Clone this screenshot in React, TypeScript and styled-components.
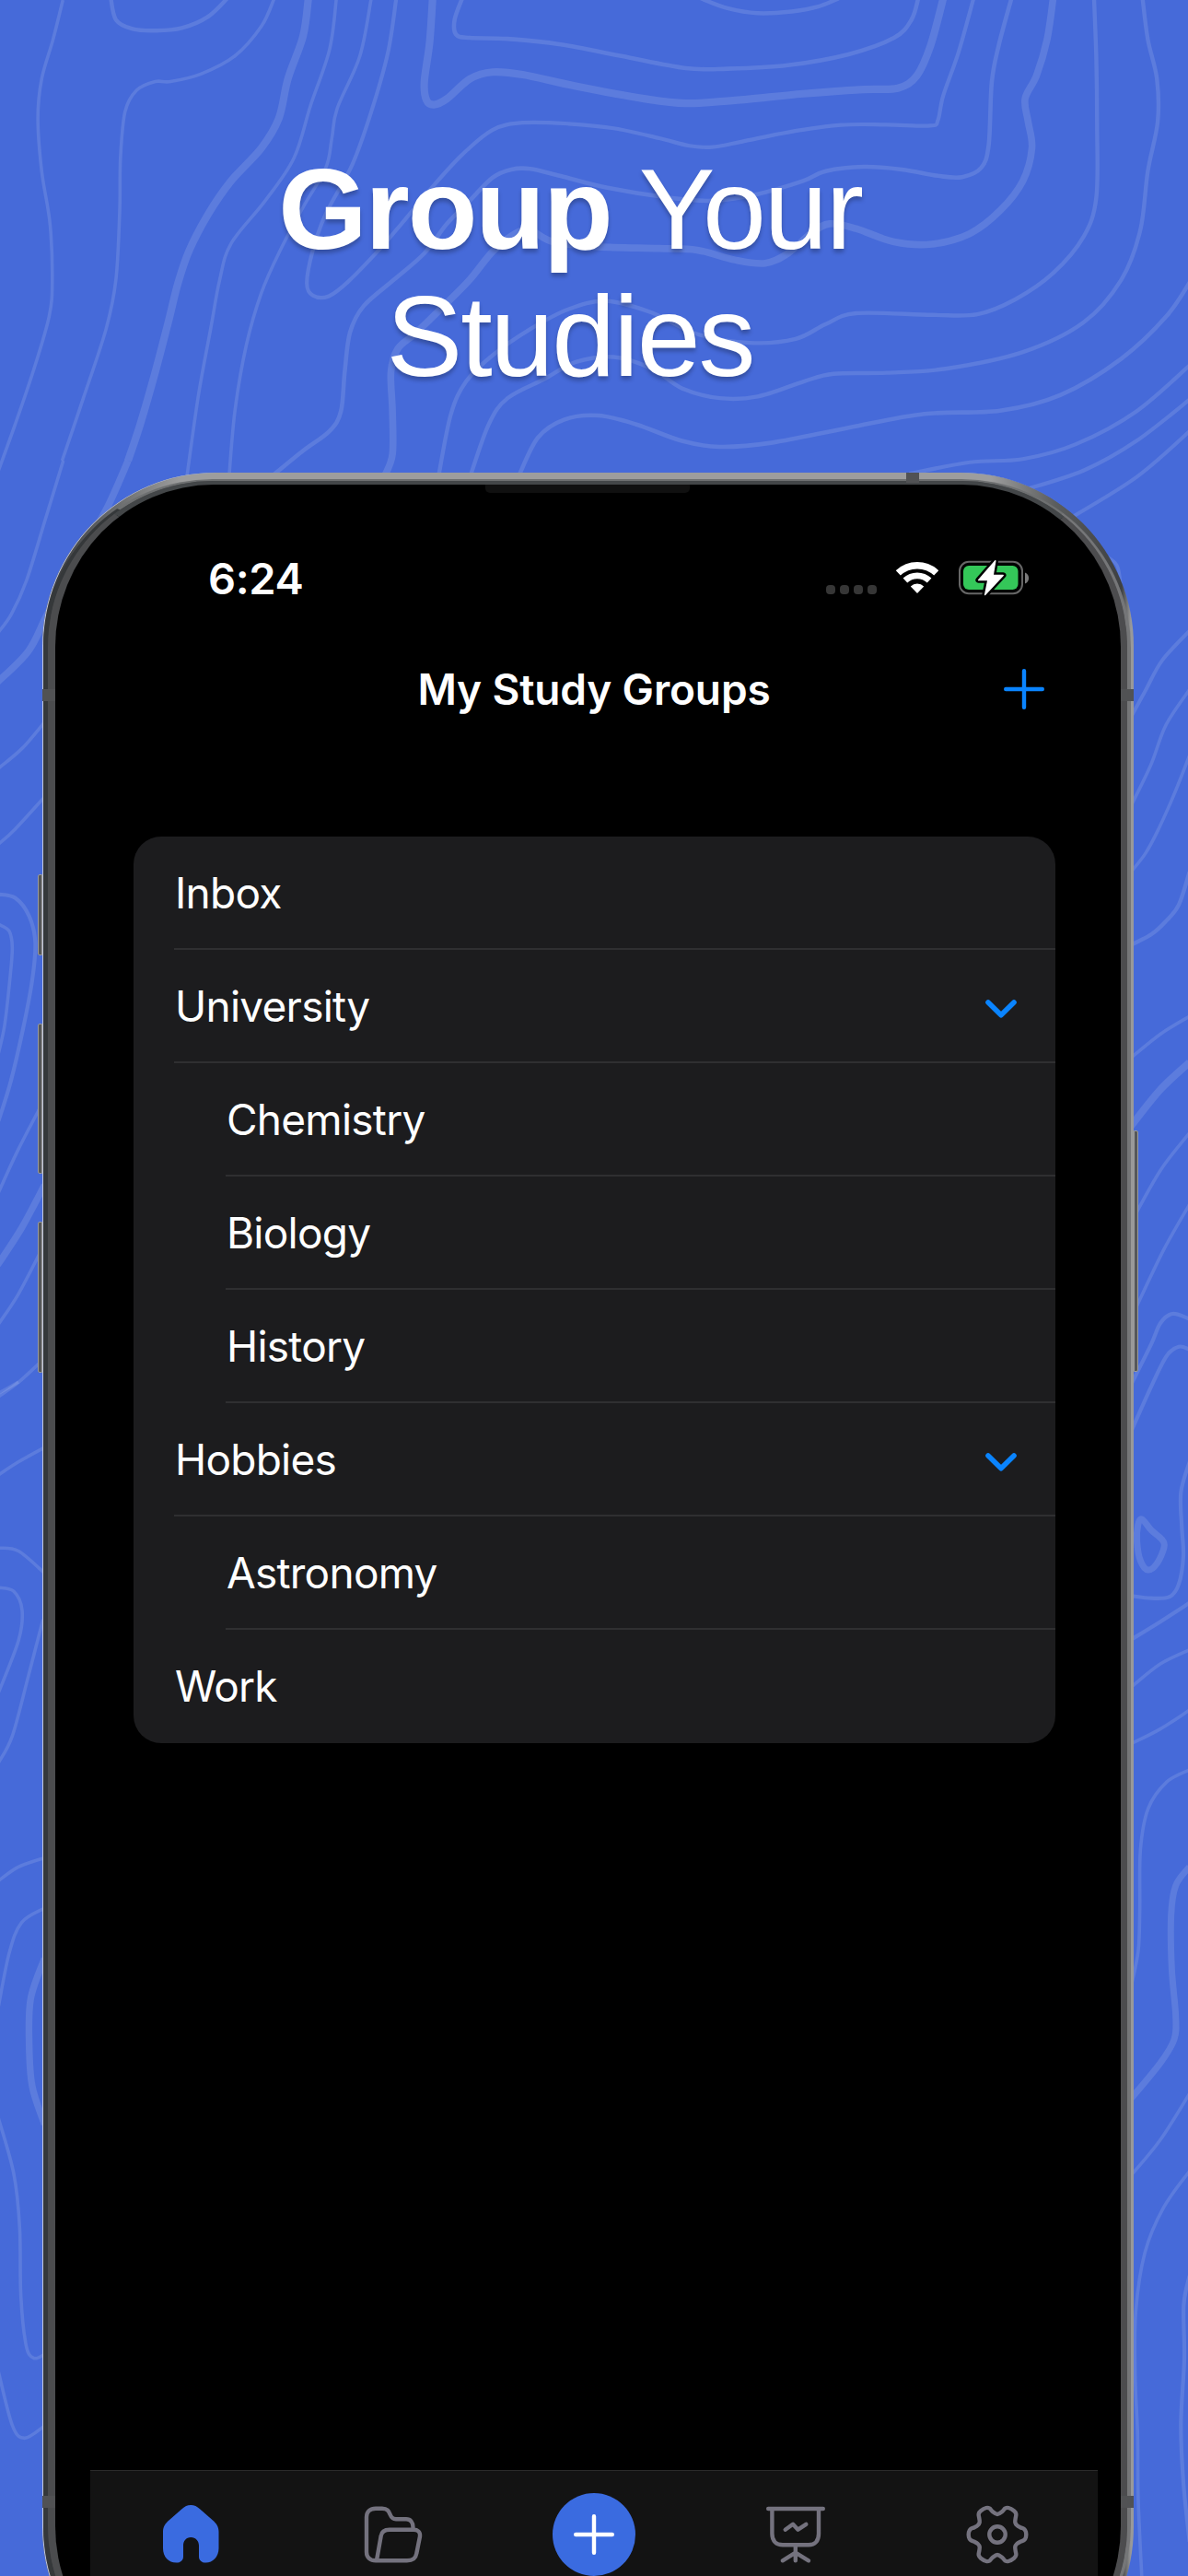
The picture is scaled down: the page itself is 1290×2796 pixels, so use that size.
import styled, { createGlobalStyle, css } from "styled-components";

type Point = [number, number];

const COLORS = {
  BACKDROP: "#466ad9",
  CONTOUR: "rgba(255, 255, 255, 0.12)",
  ACCENT: "#0a84ff",
  BRAND: "#3a6be0",
  CARD: "#1c1c1e",
  SEPARATOR: "#2f2f31",
  ICON: "#74727e",
};

const GlobalStyle = createGlobalStyle`
  *, *::before, *::after {
    box-sizing: border-box;
  }

  body {
    margin: 0;
    font-family: Inter, "Liberation Sans", sans-serif;
    color: #fff;
  }
`;

// Catmull-Rom spline through the given points
const smooth = (points: Point[], closed = false) => {
  const count = points.length;
  const at = (i: number) =>
    closed
      ? points[(i + count) % count]
      : points[Math.max(0, Math.min(count - 1, i))];
  let d = `M${points[0].join(" ")}`;
  for (let i = 0; i < (closed ? count : count - 1); i++) {
    const [p0, p1, p2, p3] = [at(i - 1), at(i), at(i + 1), at(i + 2)];
    d += `C${p1[0] + (p2[0] - p0[0]) / 6} ${p1[1] + (p2[1] - p0[1]) / 6} ${
      p2[0] - (p3[0] - p1[0]) / 6
    } ${p2[1] - (p3[1] - p1[1]) / 6} ${p2[0]} ${p2[1]}`;
  }
  return closed ? `${d}Z` : d;
};

interface Contour {
  points: Point[];
  width?: number;
  closed?: boolean;
}

interface ContourGroup {
  transform: string;
  contours: Contour[];
}

const CONTOUR_GROUPS: ContourGroup[] = [
  {
    // top
    transform: "scale(0.8227 0.35714)",
    contours: [
      { points: [[83, 0], [70, 120], [55, 240], [50, 360], [55, 520], [66, 680], [69, 850], [65, 960], [45, 1120], [20, 1290], [-2, 1430]] },
      { points: [[146, -10], [153, 60], [175, 88], [205, 93], [240, 85], [275, 50], [302, -10]], width: 4.4 },
      { points: [[362, -5], [345, 80], [310, 170], [265, 225], [225, 248], [205, 248], [180, 275], [165, 340], [159, 480], [158, 640], [153, 850], [140, 1000], [110, 1210], [82, 1400]] },
      { points: [[407, -5], [400, 110], [380, 240], [368, 360], [345, 450], [305, 550], [275, 650], [250, 760], [235, 860], [222, 980], [205, 1130], [185, 1290], [169, 1400]], width: 8.2 },
      { points: [[444, -5], [435, 150], [410, 320], [388, 480], [350, 610], [305, 740], [290, 850], [278, 1000], [262, 1200], [246, 1460]] },
      { points: [[490, -5], [475, 170], [445, 330], [438, 420], [430, 510], [400, 630], [370, 760], [345, 890], [325, 1050], [310, 1250], [302, 1460]] },
      { points: [[523, -5], [512, 160], [490, 340], [465, 500], [430, 650], [413, 760], [405, 860], [413, 898], [434, 900], [460, 855], [500, 760], [530, 680], [570, 570], [610, 470], [650, 395], [690, 373], [750, 376], [810, 390], [870, 420], [910, 443], [940, 447], [980, 430], [1040, 402], [1110, 380], [1170, 379], [1228, 382], [1238, 365], [1245, 290], [1265, 160], [1285, -5]], width: 4.2 },
      { points: [[571, -5], [567, 130], [560, 250], [563, 305], [573, 318], [590, 300], [620, 240], [650, 219], [690, 227], [760, 262], [850, 300], [905, 314], [970, 305], [1060, 285], [1140, 272], [1185, 268], [1210, 230], [1228, 140], [1245, -5]], width: 8.2 },
      { points: [[610, -5], [600, 60], [602, 105], [620, 115], [670, 118], [740, 135], [820, 170], [905, 207], [960, 209], [1040, 198], [1120, 165], [1180, 115], [1203, 60], [1212, -5]], width: 4.6 },
      { points: [[925, -5], [960, 25], [1000, 40], [1045, 35], [1080, 20], [1107, -5]], width: 4.4 },
      { points: [[1335, -5], [1318, 140], [1309, 250], [1305, 440], [1295, 510], [1270, 538], [1240, 535], [1190, 515], [1140, 507], [1090, 520], [1060, 550], [1000, 590], [940, 610], [880, 600], [800, 570], [740, 535], [700, 513], [675, 515], [650, 540], [620, 610], [590, 680], [560, 770], [520, 850], [480, 930], [462, 1010], [455, 1130], [450, 1250], [435, 1310], [400, 1370], [360, 1445]], width: 4.6 },
      { points: [[1390, -5], [1382, 120], [1368, 230], [1353, 300], [1357, 370], [1362, 450], [1350, 550], [1320, 640], [1280, 710], [1230, 742], [1180, 735], [1130, 695], [1095, 680], [1070, 710], [1040, 770], [1010, 800], [970, 790], [920, 760], [870, 755], [790, 750], [730, 735], [700, 700], [680, 710], [650, 765], [620, 850], [590, 920], [550, 1010], [525, 1060], [516, 1130], [518, 1250], [518, 1380], [508, 1445]], width: 7.6 },
      { points: [[1444, -5], [1447, 180], [1448, 380], [1447, 600], [1430, 720], [1390, 830], [1340, 910], [1290, 955], [1230, 957], [1130, 952], [1090, 985], [1050, 1030], [990, 1042], [920, 1015], [860, 950], [800, 915], [750, 940], [700, 1000], [650, 1080], [615, 1160], [595, 1260], [579, 1445]], width: 4.4 },
      { points: [[1508, -5], [1515, 120], [1527, 240], [1528, 370], [1515, 520], [1505, 700], [1480, 850], [1430, 980], [1350, 1070], [1250, 1120], [1170, 1133], [1100, 1136], [1060, 1160], [1000, 1205], [950, 1210], [900, 1180], [860, 1120], [810, 1085], [760, 1100], [720, 1150], [670, 1210], [645, 1290], [621, 1445]], width: 4.4 },
      { points: [[1575, 840], [1540, 960], [1480, 1090], [1400, 1200], [1320, 1248], [1220, 1258], [1120, 1300], [1020, 1345], [950, 1358], [900, 1340], [840, 1290], [790, 1263], [745, 1275], [710, 1330], [685, 1445]], width: 4.6 },
      { points: [[1575, 1100], [1500, 1250], [1420, 1350], [1350, 1395], [1280, 1405], [1200, 1440]], width: 4.2 },
      { points: [[1575, 1205], [1500, 1340], [1430, 1430], [1350, 1490]], width: 4.2 },
      { points: [[1575, 1300], [1500, 1450], [1405, 1585]], width: 4 },
    ],
  },
  {
    // left, around the top corner
    transform: "translate(0 500) scale(0.4114 0.3333)",
    contours: [
      { points: [[167, 0], [120, 190], [70, 390], [30, 500], [-5, 560]] },
      { points: [[338, 0], [280, 160], [200, 330], [125, 500], [75, 620], [-10, 725]], width: 7.6 },
      { points: [[125, 840], [60, 935], [-5, 1003]] },
      { points: [[125, 1085], [40, 1200], [-5, 1250]] },
    ],
  },
  {
    // left, beside the buttons
    transform: "translate(0 880) scale(0.3333 0.4082)",
    contours: [
      { points: [[-5, 222], [50, 232], [95, 280], [115, 350], [105, 450], [75, 580], [35, 720], [-5, 825]], width: 4.2 },
      { points: [[-5, 302], [30, 320], [40, 365], [32, 450], [15, 570], [-5, 645]] },
      { points: [[140, 775], [60, 900], [-5, 1015]] },
      { points: [[145, 995], [70, 1110], [-8, 1208]], width: 7.4 },
      { points: [[140, 1160], [60, 1285], [-5, 1365]] },
      { points: [[140, 1460], [60, 1520], [-5, 1558]] },
    ],
  },
  {
    // left, lower half
    transform: "translate(0 1500) scale(0.3333 0.8265)",
    contours: [
      { points: [[-5, 15], [60, 0]] },
      { points: [[-5, 122], [60, 105], [145, 86]] },
      { points: [[-5, 218], [60, 222], [145, 251]] },
      { points: [[-5, 270], [45, 275], [72, 300], [60, 340], [-5, 408]] },
      { points: [[140, 312], [90, 390], [40, 465], [-5, 500]] },
      { points: [[-5, 655], [60, 637], [145, 625]] },
      { points: [[-5, 820], [30, 750], [70, 710], [145, 691]] },
      { points: [[145, 757], [100, 810], [95, 870], [105, 925], [145, 975]], width: 7.4 },
      { points: [[-5, 967], [45, 1040], [64, 1110], [68, 1200], [85, 1265], [110, 1282], [145, 1277]] },
      { points: [[-5, 1300], [40, 1370], [80, 1387], [145, 1371]] },
    ],
  },
  {
    // right, around the top corner
    transform: "translate(645 500) scale(0.4114 0.3333)",
    contours: [
      { points: [[1320, 280], [1345, 305], [1380, 340], [1390, 400]] },
      { points: [[1575, 550], [1500, 650], [1455, 750], [1415, 840]], width: 4 },
      { points: [[1575, 740], [1510, 860], [1470, 990], [1415, 1130]] },
      { points: [[1575, 950], [1530, 1090], [1490, 1200], [1455, 1280], [1410, 1350]] },
    ],
  },
  {
    // right, beside the power button
    transform: "translate(1080 1000) scale(0.3333 0.5102)",
    contours: [
      { points: [[635, -105], [600, -35], [555, 2], [510, 28], [445, 50]], width: 4.4 },
      { points: [[445, 290], [540, 240], [635, 202]] },
      { points: [[445, 435], [540, 358], [635, 300]], width: 8 },
      { points: [[445, 640], [540, 530], [635, 450]] },
      { points: [[455, 830], [550, 700], [635, 602]] },
      { points: [[445, 985], [510, 900], [540, 855], [580, 835], [635, 846]], width: 4.2 },
      { points: [[445, 1085], [510, 990], [560, 925], [600, 905], [635, 911]], width: 4.2 },
      { points: [[635, 1150], [607, 1215], [610, 1290], [615, 1350], [600, 1410], [570, 1437], [510, 1440], [445, 1435]], width: 4.2 },
      { points: [[480, 1272], [510, 1295], [545, 1315], [552, 1332], [530, 1365], [500, 1380], [475, 1360], [464, 1320], [467, 1285]], width: 7, closed: true },
      { points: [[445, 1528], [540, 1490], [635, 1450]], width: 4.2 },
    ],
  },
  {
    // right, lower half
    transform: "translate(1210 1790) scale(0.3333 0.6416)",
    contours: [
      { points: [[55, 64], [150, 25], [245, 1]] },
      { points: [[55, 160], [150, 135], [245, 103]] },
      { points: [[245, 204], [170, 225], [110, 270], [85, 340], [83, 440], [78, 510], [55, 570]] },
      { points: [[245, 368], [200, 400], [185, 450], [187, 540], [200, 620], [195, 660], [150, 700], [55, 760]], width: 7 },
      { points: [[55, 890], [150, 830], [245, 752]] },
      { points: [[245, 883], [160, 945], [100, 1020], [70, 1120], [68, 1230], [76, 1330], [78, 1440], [90, 1575]] },
      { points: [[245, 1060], [226, 1110], [228, 1200], [217, 1310], [225, 1410], [245, 1510]], width: 4.2 },
    ],
  },
];

const GEAR_QUARTER: Point[] = [
  [0, -22],
  [5.3, -25],
  [8.3, -28.3],
  [12, -29],
  [18, -25.7],
  [20.3, -22.3],
  [19.7, -17.7],
  [19.3, -13.3],
  [21.3, -10],
  [25, -7.7],
  [29, -6],
  [31, -2.7],
];

const GEAR_HALF: Point[] = [
  ...GEAR_QUARTER,
  ...GEAR_QUARTER.map(([x, y]): Point => [x, -y]).reverse(),
];

const GEAR_OUTLINE: Point[] = [
  ...GEAR_HALF,
  ...GEAR_HALF.slice(1, -1)
    .map(([x, y]): Point => [-x, y])
    .reverse(),
];

const GROUPS = [
  { name: "Inbox" },
  { name: "University", expandable: true },
  { name: "Chemistry", nested: true },
  { name: "Biology", nested: true },
  { name: "History", nested: true },
  { name: "Hobbies", expandable: true },
  { name: "Astronomy", nested: true },
  { name: "Work" },
];

const Page = styled.div`
  position: relative;
  width: 1290px;
  height: 2796px;
  overflow: hidden;
  background: ${COLORS.BACKDROP};
`;

const Backdrop = styled.svg`
  position: absolute;
  inset: 0;
  fill: none;
  stroke: ${COLORS.CONTOUR};

  path {
    vector-effect: non-scaling-stroke;
  }
`;

const Headline = styled.h1`
  position: relative;
  width: 1238px;
  height: 513px;
  margin: 0;
  padding-top: 158px;
  font-family: "Liberation Sans", Arial, sans-serif;
  font-size: 124px;
  font-weight: 400;
  letter-spacing: -2.1px;
  line-height: 138px;
  text-align: center;
  text-shadow: 0 4px 4px rgba(0, 0, 0, 0.25);
`;

const Phone = styled.div`
  position: relative;
  width: 1185px;
  height: 2418px;
  margin-left: 46px;
`;

const OuterRim = styled.div`
  height: 100%;
  padding: 7px 3px 7px 1px;
  border-radius: 188px;
  background: linear-gradient(
    90deg,
    #3a3c3e 12px,
    #6a6c6d 80px,
    #9d9d9d 150px,
    #9d9d9d 1030px,
    #5b5d5e 1100px,
    #3e4042 1172px,
    #999 1182px
  );
  box-shadow: inset 1px 0 0 #c3c8dc;
`;

const MiddleRim = styled.div`
  height: 100%;
  border-style: solid;
  border-width: 2px 4px 2px 5px;
  border-color: #6e7071 #757678 #757678 #35383a;
  border-radius: 184px;
  background: #48494b;
`;

const Screen = styled.div`
  display: flex;
  flex-direction: column;
  align-items: center;
  height: 100%;
  padding: 0 25px 0 38px;
  overflow: hidden;
  border-style: solid;
  border-width: 4px 7px 4px 8px;
  border-color: #434648 #4c4c4e #4c4c4e #4b4c4e;
  border-radius: 180px;
  background: #000;
`;

const SideButton = styled.div<{ $side: "left" | "right"; $top: number; $height: number }>`
  position: absolute;
  top: ${({ $top }) => $top}px;
  ${({ $side }) => $side}: -5px;
  width: 5px;
  height: ${({ $height }) => $height}px;
  border: 1px solid #9b9b9b;
  border-radius: ${({ $side }) => ($side === "left" ? "2px 0 0 2px" : "0 2px 2px 0")};
  background: #55575a;
`;

const Antenna = styled.div<{ $edge: "left" | "right" | "top"; $offset: number }>`
  position: absolute;
  background: #515254;

  ${({ $edge, $offset }) =>
    $edge === "top"
      ? css`
          top: 0;
          left: ${$offset}px;
          width: 14px;
          height: 11px;
        `
      : css`
          top: ${$offset}px;
          ${$edge}: 0;
          width: 14px;
          height: 13px;
        `}
`;

const Speaker = styled.div`
  flex: none;
  width: 222px;
  height: 9px;
  margin-right: 14px;
  border-radius: 0 0 5px 5px;
  background: #101010;
`;

const StatusBar = styled.div`
  display: flex;
  flex: none;
  align-items: center;
  justify-content: space-between;
  width: 100%;
  height: 184px;
  padding: 0 75px 0 128px;
`;

const Time = styled.span`
  font-size: 47px;
  font-weight: 600;
  letter-spacing: -0.4px;
`;

const StatusIcons = styled.div`
  display: flex;
  align-items: flex-end;
  height: 36px;
`;

const Signal = styled.div`
  display: flex;
  gap: 5px;
  margin-right: 21px;
`;

const SignalDot = styled.span`
  width: 10px;
  height: 10px;
  border-radius: 4px;
  background: #363636;
`;

const WifiIcon = styled.svg`
  margin-right: 22px;
`;

const NavBar = styled.header`
  display: grid;
  flex: none;
  grid-template-columns: 1fr auto 1fr;
  align-items: center;
  width: 100%;
  height: 57px;
  padding: 0 58px;
`;

const Title = styled.h2`
  grid-column: 2;
  margin: 0;
  font-size: 46px;
  font-weight: 600;
  letter-spacing: -0.15px;
  line-height: 56px;
`;

const AddButton = styled.button`
  display: flex;
  justify-self: end;
  padding: 0;
  border: 0;
  background: none;
`;

const Content = styled.main`
  flex: none;
  align-self: flex-start;
  width: 1048px;
  height: 1905px;
  padding: 132px 0 0 47px;
`;

const GroupList = styled.ul`
  margin: 0;
  padding: 0;
  overflow: hidden;
  list-style: none;
  border-radius: 30px;
  background: ${COLORS.CARD};
`;

const GroupRow = styled.li<{ $nested?: boolean }>`
  padding-left: ${({ $nested }) => ($nested ? 100 : 44)}px;
`;

const GroupLabel = styled.div<{ $divided: boolean }>`
  display: flex;
  align-items: center;
  justify-content: space-between;
  height: 123px;
  padding: 1px 42px 0 1px;
  border-bottom: 2px solid
    ${({ $divided }) => ($divided ? COLORS.SEPARATOR : "transparent")};
  font-size: 46px;
  letter-spacing: -0.75px;
`;

const ChevronIcon = styled.svg`
  margin-top: 6px;
`;

const TabBar = styled.nav`
  display: flex;
  flex: none;
  align-items: flex-start;
  width: 100%;
  height: 250px;
  padding-top: 24px;
  border-top: 1px solid #2b2b2b;
  background: #131313;
`;

const Tab = styled.button`
  display: flex;
  flex: 1;
  align-items: center;
  justify-content: center;
  height: 90px;
  padding: 0;
  border: 0;
  background: none;
`;

const TabIcon = styled.svg<{ $active?: boolean }>`
  width: 72px;
  height: 72px;
  margin-top: -2px;
  fill: ${({ $active }) => ($active ? COLORS.BRAND : "none")};
  stroke: ${({ $active }) => ($active ? "none" : COLORS.ICON)};
  stroke-width: 4.4;
  stroke-linecap: round;
  stroke-linejoin: round;
`;

const CreateBadge = styled.span`
  display: flex;
  align-items: center;
  justify-content: center;
  width: 90px;
  height: 90px;
  border-radius: 50%;
  background: ${COLORS.BRAND};
`;

function Plus({ color }: { color: string }) {
  return (
    <svg width="44" height="44" viewBox="0 0 44 44">
      <path
        d="M22 2.2V41.8M2.2 22H41.8"
        stroke={color}
        strokeWidth="4.4"
        strokeLinecap="round"
      />
    </svg>
  );
}

function Chevron() {
  return (
    <ChevronIcon width="34" height="20" viewBox="0 0 34 20" fill="none">
      <path
        d="M3 3L17 16.8L31 3"
        stroke={COLORS.ACCENT}
        strokeWidth="5.6"
        strokeLinecap="round"
        strokeLinejoin="round"
      />
    </ChevronIcon>
  );
}

function Wifi() {
  return (
    <WifiIcon width="46" height="36" viewBox="0 0 46 36" fill="none">
      <g stroke="#fff">
        <path d="M2.3 12.9A30.3 30.3 0 0 1 43.7 12.9" strokeWidth="7.4" />
        <path d="M9.9 21A19.2 19.2 0 0 1 36.1 21" strokeWidth="6.8" />
      </g>
      <path d="M23 35L15.8 27.4A10.5 10.5 0 0 1 30.2 27.4Z" fill="#fff" />
    </WifiIcon>
  );
}

const BOLT = "M39.8 -0.2L21.6 20.6H31.8L28.6 36.6L48.2 15.4H37.2Z";

function Battery() {
  return (
    <svg width="76" height="36" viewBox="0 0 76 36" overflow="visible">
      <rect x="1" y="0.8" width="68" height="34.4" rx="10" fill="none" stroke="#666" strokeWidth="2" />
      <rect x="5" y="5" width="59.5" height="26" rx="6" fill="#34c759" />
      <path d="M72 12.5C77.5 14.5 77.5 22.5 72 24.5Z" fill="#7a7a7a" />
      <path d={BOLT} fill="#000" stroke="#000" strokeWidth="6.5" strokeLinejoin="round" />
      <path d={BOLT} fill="#fff" stroke="#fff" strokeWidth="1.4" strokeLinejoin="round" />
    </svg>
  );
}

function App() {
  return (
    <>
      <GlobalStyle />
      <Page>
        <Backdrop width="1290" height="2796">
          {CONTOUR_GROUPS.map(({ transform, contours }) => (
            <g key={transform} transform={transform}>
              {contours.map(({ points, width = 3.6, closed }, index) => (
                <path key={index} d={smooth(points, closed)} strokeWidth={width} />
              ))}
            </g>
          ))}
        </Backdrop>
        <Headline>
          <b>Group</b> Your
          <br />
          Studies
        </Headline>
        <Phone>
          <SideButton $side="left" $top={436} $height={88} />
          <SideButton $side="left" $top={598} $height={163} />
          <SideButton $side="left" $top={813} $height={164} />
          <SideButton $side="right" $top={714} $height={262} />
          <OuterRim>
            <MiddleRim>
              <Screen>
                <Speaker />
                <StatusBar>
                  <Time>6:24</Time>
                  <StatusIcons>
                    <Signal>
                      <SignalDot />
                      <SignalDot />
                      <SignalDot />
                      <SignalDot />
                    </Signal>
                    <Wifi />
                    <Battery />
                  </StatusIcons>
                </StatusBar>
                <NavBar>
                  <Title>My Study Groups</Title>
                  <AddButton aria-label="Add group">
                    <Plus color={COLORS.ACCENT} />
                  </AddButton>
                </NavBar>
                <Content>
                  <GroupList>
                    {GROUPS.map(({ name, nested, expandable }, index) => (
                      <GroupRow key={name} $nested={nested}>
                        <GroupLabel $divided={index < GROUPS.length - 1}>
                          {name}
                          {expandable && <Chevron />}
                        </GroupLabel>
                      </GroupRow>
                    ))}
                  </GroupList>
                </Content>
                <TabBar>
                  <Tab aria-label="Home">
                    <TabIcon viewBox="0 0 72 72" $active>
                      <path d="M36.2 5C40 5 43 6.5 46 9.2L60 21.5C64 25 66.5 28.5 66.5 34V52C66.5 61 60 67.6 52.5 67.6C48 67.6 45 65 45 61V49C45 44 41.5 40 36.3 40C31 40 28 44 28 49V61C28 65 25 67.6 20.5 67.6C12 67.6 6 61 6 52V34C6 28.5 8.5 25 12.5 21.5L26.5 9.2C29.5 6.5 32.4 5 36.2 5Z" />
                    </TabIcon>
                  </Tab>
                  <Tab aria-label="Folders">
                    <TabIcon viewBox="0 0 72 72">
                      <path d="M58.5 31V29C58.5 24 56 20.3 51 20.3H40C31 20.3 36 8.7 25 8.7H18C12 8.7 8 12 8 18V56C8 62 12 65.3 18 65.3H52C58 65.3 61.5 62.5 62.3 57.5L66 39C66.6 34 63.5 31.7 59 31.7H33C27.5 31.7 24.3 34.5 23.7 38.5L19 65" />
                    </TabIcon>
                  </Tab>
                  <Tab aria-label="Create">
                    <CreateBadge>
                      <Plus color="#fff" />
                    </CreateBadge>
                  </Tab>
                  <Tab aria-label="Statistics">
                    <TabIcon viewBox="0 0 72 72">
                      <path d="M6.2 9H65.8M10.4 9V36C10.4 44 15 48.3 22 48.3H50C57 48.3 61 44 61 36V9M24.7 31.7L33 25.8L38.5 31.7L47.3 25.8M35.8 48.3V65.3M35.8 56.7L21.8 65.3M35.8 56.7L50 65.3" />
                    </TabIcon>
                  </Tab>
                  <Tab aria-label="Settings">
                    <TabIcon viewBox="-36 -37 72 72">
                      <path d={smooth(GEAR_OUTLINE, true)} />
                      <circle r="8.7" />
                    </TabIcon>
                  </Tab>
                </TabBar>
              </Screen>
            </MiddleRim>
          </OuterRim>
          <Antenna $edge="top" $offset={938} />
          <Antenna $edge="left" $offset={235} />
          <Antenna $edge="right" $offset={235} />
          <Antenna $edge="left" $offset={2196} />
          <Antenna $edge="right" $offset={2196} />
        </Phone>
      </Page>
    </>
  );
}

export default App;
